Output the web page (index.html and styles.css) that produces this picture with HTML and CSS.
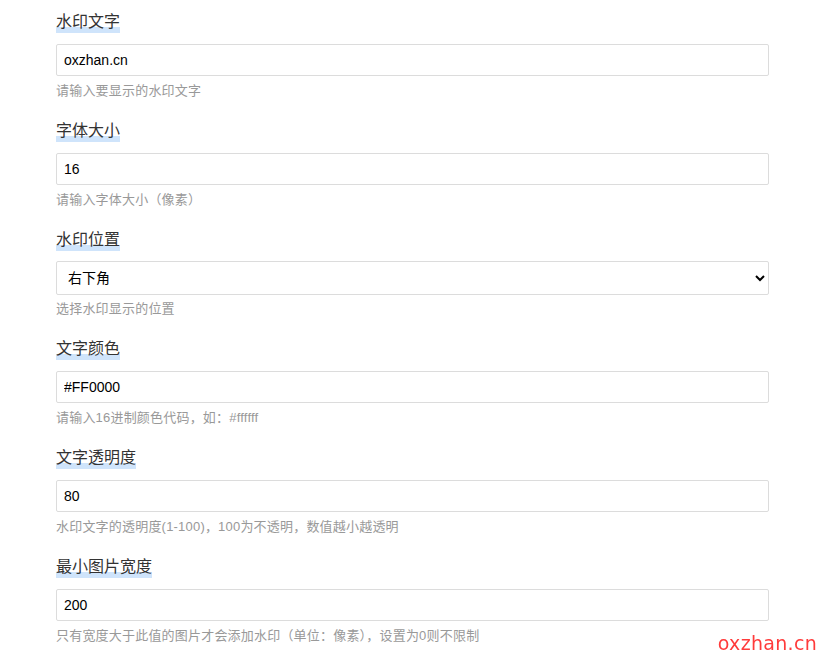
FILE: index.html
```html
<!DOCTYPE html>
<html lang="zh-CN">
<head>
<meta charset="utf-8">
<title>水印设置</title>
<link rel="stylesheet" href="styles.css">
</head>
<body>
<div class="form">
  <div class="group">
    <label class="label">水印文字</label>
    <input class="field" type="text" value="oxzhan.cn">
    <div class="help">请输入要显示的水印文字</div>
  </div>
  <div class="group">
    <label class="label">字体大小</label>
    <input class="field" type="text" value="16">
    <div class="help">请输入字体大小（像素）</div>
  </div>
  <div class="group">
    <label class="label">水印位置</label>
    <select class="field select">
      <option>右下角</option>
      <option>左上角</option>
      <option>右上角</option>
      <option>左下角</option>
      <option>居中</option>
    </select>
    <div class="help">选择水印显示的位置</div>
  </div>
  <div class="group">
    <label class="label">文字颜色</label>
    <input class="field" type="text" value="#FF0000">
    <div class="help">请输入16进制颜色代码，如：#ffffff</div>
  </div>
  <div class="group">
    <label class="label">文字透明度</label>
    <input class="field" type="text" value="80">
    <div class="help">水印文字的透明度(1-100)，100为不透明，数值越小越透明</div>
  </div>
  <div class="group">
    <label class="label">最小图片宽度</label>
    <input class="field" type="text" value="200">
    <div class="help">只有宽度大于此值的图片才会添加水印（单位：像素），设置为0则不限制</div>
  </div>
</div>
<div class="watermark">oxzhan.cn</div>
</body>
</html>
```
FILE: styles.css
```css
html, body {
  margin: 0;
  padding: 0;
  background: #fff;
}
body {
  font-family: "Liberation Sans", "Noto Sans CJK SC", sans-serif;
  color: #333;
  height: 659px;
  overflow: hidden;
}
.form {
  padding: 11px 0 0 56px;
  width: 713px;
}
.group {
  display: flex;
  flex-direction: column;
  align-items: flex-start;
  margin-bottom: 19px;
}
.label {
  font-size: 16px;
  line-height: 22px;
  color: #333;
  background: linear-gradient(to bottom, transparent 72%, #cfe4fb 72%);
  margin-bottom: 11px;
}
.field {
  box-sizing: border-box;
  width: 713px;
  height: 32px;
  border: 1px solid #dcdcdc;
  border-radius: 2px;
  padding: 0 7px;
  font-family: "Liberation Sans", "Noto Sans CJK SC", sans-serif;
  font-size: 14px;
  color: #000;
  background: #fff;
  outline: none;
  margin: 0;
}
.select {
  height: 34px;
  padding: 0 7px;
  margin-top: -1px;
  margin-bottom: -1px;
}
.help {
  margin-top: 5px;
  font-size: 13px;
  line-height: 20px;
  color: #999;
  letter-spacing: 0.2px;
}
.watermark {
  position: fixed;
  right: 10px;
  bottom: 5px;
  font-family: "DejaVu Sans", sans-serif;
  font-size: 19px;
  color: #ff3b3b;
  letter-spacing: 0.3px;
}
```
